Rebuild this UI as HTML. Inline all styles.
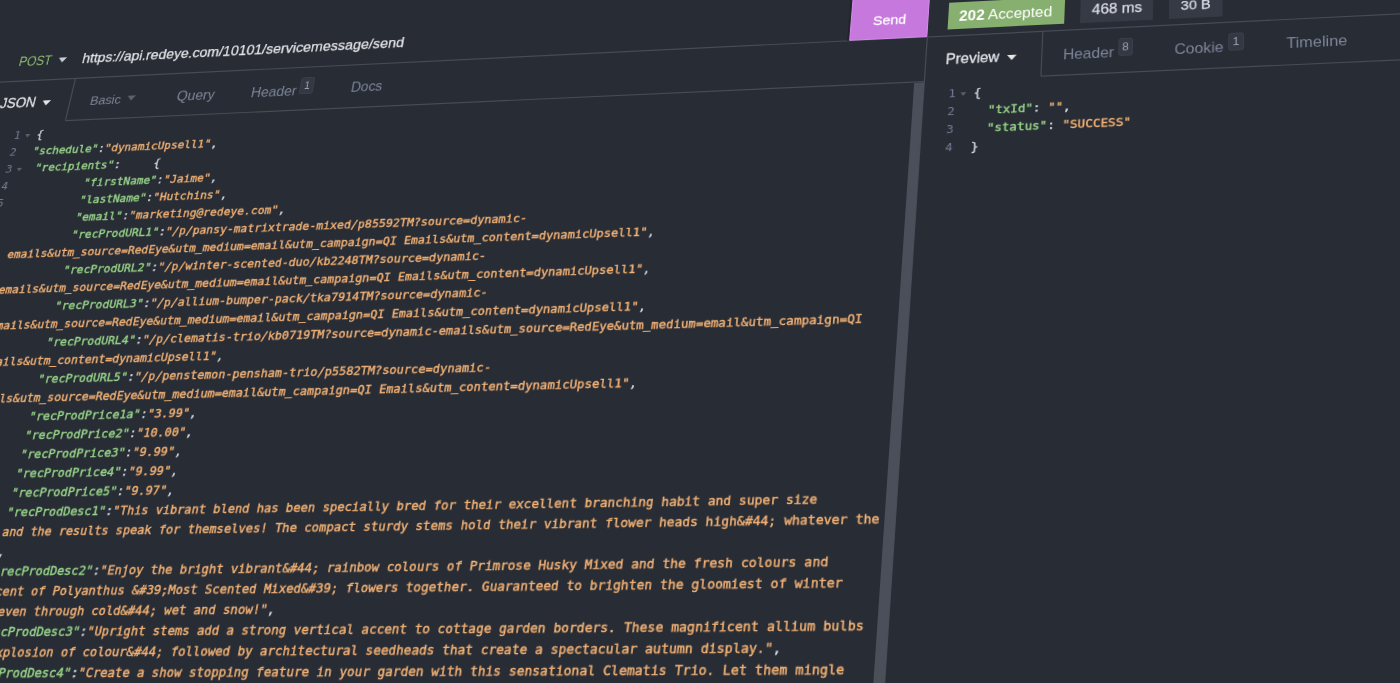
<!DOCTYPE html>
<html lang="en"><head><meta charset="utf-8"><title>Insomnia</title><style>
html,body{margin:0;padding:0;background:#282c34;}
body{width:1400px;height:683px;overflow:hidden;position:relative;}
#w{position:absolute;left:0;top:0;width:0;height:0;transform-origin:0 0;transform:matrix3d(0.8300468507,-0.04561336981,0,-6.276996772e-05,-0.2114893297,0.8159016292,0,-0.0001695810426,0,0,1,0,36.10583803,137.9209594,0,1);}
#w div,#w span,#w pre{position:absolute;margin:0;white-space:pre;}
#w .t{font-family:"Liberation Sans",Arial,sans-serif;}
#w pre{letter-spacing:0.015px;-webkit-text-stroke:0.42px;font-family:"DejaVu Sans Mono","Liberation Mono",monospace;font-size:12.956px;line-height:20px;color:#d4d9e4;}
#w pre.ln{color:#757b93;text-align:right;-webkit-text-stroke:0;}
i{font-style:normal}
.k{color:#96d488}.s{color:#f2b174}.p{color:#d4d9e4}
</style></head><body><svg width="1400" height="683" viewBox="0 0 1400 683" style="position:absolute;left:0;top:0"><line x1="-55.83" y1="84.87" x2="1442.27" y2="11.85" stroke="#474b56" stroke-width="1.20"/>
<line x1="65.40" y1="120.70" x2="924.34" y2="81.54" stroke="#474b56" stroke-width="1.20"/>
<line x1="1040.95" y1="76.22" x2="1444.13" y2="57.83" stroke="#474b56" stroke-width="1.20"/>
<line x1="75.51" y1="78.47" x2="65.40" y2="120.70" stroke="#474b56" stroke-width="1.20"/>
<line x1="1042.85" y1="31.32" x2="1040.95" y2="76.22" stroke="#474b56" stroke-width="1.20"/>
<line x1="927.28" y1="36.95" x2="882.29" y2="718.87" stroke="#474b56" stroke-width="1.20"/>
<polygon points="914.17,83.05 924.27,82.59 882.29,718.87 870.91,718.88" fill="#4b4f5a" />
<polygon points="854.18,-14.49 930.48,-18.51 926.84,36.54 849.70,40.31" fill="#c678dd" stroke="#d68cec" stroke-width="1"/>
<line x1="852.35" y1="-14.39" x2="847.81" y2="40.83" stroke="#20232a" stroke-width="1.20"/>
<polygon points="949.20,2.74 1065.17,-3.18 1064.15,23.67 947.55,29.40" fill="#87b070" />
<polygon points="1081.01,-6.74 1153.50,-10.46 1152.91,19.65 1079.97,23.24" fill="#353a44" />
<polygon points="1169.33,-11.27 1222.66,-14.01 1222.50,16.40 1168.84,19.04" fill="#353a44" /></svg><div id="w">
<span class="t" style="left:939.30px;top:-99.95px;font-size:15.30px;line-height:15.30px;color:#ffffff;-webkit-text-stroke:0.3px">Send</span>
<span class="t" style="left:-43.90px;top:-101.70px;font-size:16.60px;line-height:16.60px;color:#8fbf72;transform:scaleX(0.88);transform-origin:0 0">POST</span>
<div style="left:3.75px;top:-96.75px;width:0;height:0;border-left:5.25px solid transparent;border-right:5.25px solid transparent;border-top:6.50px solid #c8ccd4"></div>
<span class="t" style="left:33.30px;top:-102.34px;font-size:16.70px;line-height:16.70px;color:#e4e6ea;-webkit-text-stroke:0.25px">https://api.redeye.com/10101/servicemessage/send</span>
<span class="t" style="left:-53.90px;top:-51.14px;font-size:16.00px;line-height:16.00px;color:#e2e5ea;-webkit-text-stroke:0.3px">JSON</span>
<div style="left:-3.50px;top:-45.30px;width:0;height:0;border-left:5.50px solid transparent;border-right:5.50px solid transparent;border-top:6.00px solid #e6e6e6"></div>
<span class="t" style="left:54.90px;top:-50.34px;font-size:15.05px;line-height:15.05px;color:#7c849a;">Basic</span>
<div style="left:98.75px;top:-45.55px;width:0;height:0;border-left:5.25px solid transparent;border-right:5.25px solid transparent;border-top:6.50px solid #5b606d"></div>
<span class="t" style="left:158.30px;top:-51.49px;font-size:16.41px;line-height:16.41px;color:#7c849a;">Query</span>
<span class="t" style="left:245.70px;top:-51.31px;font-size:16.20px;line-height:16.20px;color:#7c849a;">Header</span>
<div style="left:302.30px;top:-58.50px;width:15.50px;height:20.30px;background:#343842;border-radius:3.5px;box-shadow:inset 0 0 0 1px #3b3f4a"></div>
<span class="t" style="left:306.70px;top:-53.93px;font-size:12.20px;line-height:12.20px;color:#9aa2b5;">1</span>
<span class="t" style="left:362.00px;top:-50.94px;font-size:15.76px;line-height:15.76px;color:#7c849a;">Docs</span>
<span class="t" style="left:1031.80px;top:-101.50px;font-size:16.30px;line-height:16.30px;color:#ffffff;"><b>202</b> Accepted</span>
<span class="t" style="left:1172.30px;top:-100.44px;font-size:16.00px;line-height:16.00px;color:#dcdfe5;-webkit-text-stroke:0.25px">468 ms</span>
<span class="t" style="left:1264.80px;top:-100.06px;font-size:15.07px;line-height:15.07px;color:#dcdfe5;-webkit-text-stroke:0.25px">30 B</span>
<span class="t" style="left:1020.20px;top:-51.07px;font-size:15.91px;line-height:15.91px;color:#e2e5ea;-webkit-text-stroke:0.3px">Preview</span>
<div style="left:1085.30px;top:-45.20px;width:0;height:0;border-left:5.50px solid transparent;border-right:5.50px solid transparent;border-top:6.00px solid #e6e6e6"></div>
<span class="t" style="left:1143.70px;top:-51.28px;font-size:16.16px;line-height:16.16px;color:#7c849a;">Header</span>
<div style="left:1200.50px;top:-58.50px;width:15.50px;height:20.30px;background:#343842;border-radius:3.5px;box-shadow:inset 0 0 0 1px #3b3f4a"></div>
<span class="t" style="left:1204.90px;top:-53.93px;font-size:12.20px;line-height:12.20px;color:#9aa2b5;">8</span>
<span class="t" style="left:1258.90px;top:-51.30px;font-size:16.19px;line-height:16.19px;color:#7c849a;">Cookie</span>
<div style="left:1314.00px;top:-58.50px;width:15.50px;height:20.30px;background:#343842;border-radius:3.5px;box-shadow:inset 0 0 0 1px #3b3f4a"></div>
<span class="t" style="left:1318.40px;top:-53.93px;font-size:12.20px;line-height:12.20px;color:#9aa2b5;">1</span>
<span class="t" style="left:1373.00px;top:-51.53px;font-size:16.46px;line-height:16.46px;color:#7c849a;">Timeline</span>
<pre style="left:0;top:-14.49px"><i class="p">{</i></pre>
<pre class="ln" style="left:-50.90px;top:-14.49px;width:31.20px">1</pre>
<pre style="left:0;top:5.51px"><i class="k">"schedule"</i><i class="p">:</i><i class="s">"dynamicUpsell1"</i><i class="p">,</i></pre>
<pre class="ln" style="left:-50.90px;top:5.51px;width:31.20px">2</pre>
<pre style="left:0;top:25.51px"> <i class="k">"recipients"</i><i class="p">:</i>     <i class="p">{</i></pre>
<pre class="ln" style="left:-50.90px;top:25.51px;width:31.20px">3</pre>
<pre style="left:0;top:45.51px">         <i class="k">"firstName"</i><i class="p">:</i><i class="s">"Jaime"</i><i class="p">,</i></pre>
<pre class="ln" style="left:-50.90px;top:45.51px;width:31.20px">4</pre>
<pre style="left:0;top:65.51px">         <i class="k">"lastName"</i><i class="p">:</i><i class="s">"Hutchins"</i><i class="p">,</i></pre>
<pre class="ln" style="left:-50.90px;top:65.51px;width:31.20px">5</pre>
<pre style="left:0;top:85.51px">         <i class="k">"email"</i><i class="p">:</i><i class="s">"marketing@redeye.com"</i><i class="p">,</i></pre>
<pre class="ln" style="left:-50.90px;top:85.51px;width:31.20px">6</pre>
<pre style="left:0;top:105.51px">         <i class="k">"recProdURL1"</i><i class="p">:</i><i class="s">"/p/pansy-matrixtrade-mixed/p85592TM?source=dynamic-</i></pre>
<pre class="ln" style="left:-50.90px;top:105.51px;width:31.20px">7</pre>
<pre style="left:0;top:125.51px"><i class="s">emails&amp;utm_source=RedEye&amp;utm_medium=email&amp;utm_campaign=QI Emails&amp;utm_content=dynamicUpsell1"</i><i class="p">,</i></pre>
<pre style="left:0;top:145.51px">         <i class="k">"recProdURL2"</i><i class="p">:</i><i class="s">"/p/winter-scented-duo/kb2248TM?source=dynamic-</i></pre>
<pre class="ln" style="left:-50.90px;top:145.51px;width:31.20px">8</pre>
<pre style="left:0;top:165.51px"><i class="s">emails&amp;utm_source=RedEye&amp;utm_medium=email&amp;utm_campaign=QI Emails&amp;utm_content=dynamicUpsell1"</i><i class="p">,</i></pre>
<pre style="left:0;top:185.51px">         <i class="k">"recProdURL3"</i><i class="p">:</i><i class="s">"/p/allium-bumper-pack/tka7914TM?source=dynamic-</i></pre>
<pre class="ln" style="left:-50.90px;top:185.51px;width:31.20px">9</pre>
<pre style="left:0;top:205.51px"><i class="s">emails&amp;utm_source=RedEye&amp;utm_medium=email&amp;utm_campaign=QI Emails&amp;utm_content=dynamicUpsell1"</i><i class="p">,</i></pre>
<pre style="left:0;top:225.51px">         <i class="k">"recProdURL4"</i><i class="p">:</i><i class="s">"/p/clematis-trio/kb0719TM?source=dynamic-emails&amp;utm_source=RedEye&amp;utm_medium=email&amp;utm_campaign=QI</i></pre>
<pre class="ln" style="left:-50.90px;top:225.51px;width:31.20px">10</pre>
<pre style="left:0;top:245.51px"><i style="margin-left:1.7px"></i><i class="s">Emails&amp;utm_content=dynamicUpsell1"</i><i class="p">,</i></pre>
<pre style="left:0;top:265.51px">         <i class="k">"recProdURL5"</i><i class="p">:</i><i class="s">"/p/penstemon-pensham-trio/p5582TM?source=dynamic-</i></pre>
<pre class="ln" style="left:-50.90px;top:265.51px;width:31.20px">11</pre>
<pre style="left:0;top:285.51px"><i class="s">emails&amp;utm_source=RedEye&amp;utm_medium=email&amp;utm_campaign=QI Emails&amp;utm_content=dynamicUpsell1"</i><i class="p">,</i></pre>
<pre style="left:0;top:305.51px">         <i class="k">"recProdPrice1a"</i><i class="p">:</i><i class="s">"3.99"</i><i class="p">,</i></pre>
<pre class="ln" style="left:-50.90px;top:305.51px;width:31.20px">12</pre>
<pre style="left:0;top:325.51px">         <i class="k">"recProdPrice2"</i><i class="p">:</i><i class="s">"10.00"</i><i class="p">,</i></pre>
<pre class="ln" style="left:-50.90px;top:325.51px;width:31.20px">13</pre>
<pre style="left:0;top:345.51px">         <i class="k">"recProdPrice3"</i><i class="p">:</i><i class="s">"9.99"</i><i class="p">,</i></pre>
<pre class="ln" style="left:-50.90px;top:345.51px;width:31.20px">14</pre>
<pre style="left:0;top:365.51px">         <i class="k">"recProdPrice4"</i><i class="p">:</i><i class="s">"9.99"</i><i class="p">,</i></pre>
<pre class="ln" style="left:-50.90px;top:365.51px;width:31.20px">15</pre>
<pre style="left:0;top:385.51px">         <i class="k">"recProdPrice5"</i><i class="p">:</i><i class="s">"9.97"</i><i class="p">,</i></pre>
<pre class="ln" style="left:-50.90px;top:385.51px;width:31.20px">16</pre>
<pre style="left:0;top:405.51px">         <i class="k">"recProdDesc1"</i><i class="p">:</i><i class="s">"This vibrant blend has been specially bred for their excellent branching habit and super size</i></pre>
<pre class="ln" style="left:-50.90px;top:405.51px;width:31.20px">17</pre>
<pre style="left:0;top:425.51px"><i class="s">blossoms and the results speak for themselves! The compact sturdy stems hold their vibrant flower heads high&amp;#44; whatever the</i></pre>
<pre style="left:0;top:445.51px"><i class="s">weather."</i><i class="p">,</i></pre>
<pre style="left:0;top:465.51px">         <i class="k">"recProdDesc2"</i><i class="p">:</i><i class="s">"Enjoy the bright vibrant&amp;#44; rainbow colours of Primrose Husky Mixed and the fresh colours and</i></pre>
<pre class="ln" style="left:-50.90px;top:465.51px;width:31.20px">18</pre>
<pre style="left:0;top:485.51px"><i class="s">heavenly scent of Polyanthus &amp;#39;Most Scented Mixed&amp;#39; flowers together. Guaranteed to brighten the gloomiest of winter</i></pre>
<pre style="left:0;top:505.51px"><i class="s">days ahead even through cold&amp;#44; wet and snow!"</i><i class="p">,</i></pre>
<pre style="left:0;top:525.51px">         <i class="k">"recProdDesc3"</i><i class="p">:</i><i class="s">"Upright stems add a strong vertical accent to cottage garden borders. These magnificent allium bulbs</i></pre>
<pre class="ln" style="left:-50.90px;top:525.51px;width:31.20px">19</pre>
<pre style="left:0;top:545.51px"><i class="s">produce an explosion of colour&amp;#44; followed by architectural seedheads that create a spectacular autumn display."</i><i class="p">,</i></pre>
<pre style="left:0;top:565.51px">         <i class="k">"recProdDesc4"</i><i class="p">:</i><i class="s">"Create a show stopping feature in your garden with this sensational Clematis Trio. Let them mingle</i></pre>
<pre class="ln" style="left:-50.90px;top:565.51px;width:31.20px">20</pre>
<pre style="left:0;top:585.51px"><i class="s">through shrubs and climb over fences for a spectacular display of colour from early summer."</i><i class="p">,</i></pre>
<div style="left:-13.75px;top:-5.30px;width:0;height:0;border-left:3.25px solid transparent;border-right:3.25px solid transparent;border-top:4.20px solid #5b606d"></div>
<div style="left:-13.75px;top:34.70px;width:0;height:0;border-left:3.25px solid transparent;border-right:3.25px solid transparent;border-top:4.20px solid #5b606d"></div>
<pre style="left:1052.10px;top:-14.49px"><i class="p">{</i></pre>
<pre class="ln" style="left:1001.90px;top:-14.49px;width:31.20px">1</pre>
<pre style="left:1052.10px;top:5.51px">  <i class="k">"txId"</i><i class="p">: </i><i class="s">""</i><i class="p">,</i></pre>
<pre class="ln" style="left:1001.90px;top:5.51px;width:31.20px">2</pre>
<pre style="left:1052.10px;top:25.51px">  <i class="k">"status"</i><i class="p">: </i><i class="s">"SUCCESS"</i></pre>
<pre class="ln" style="left:1001.90px;top:25.51px;width:31.20px">3</pre>
<pre style="left:1052.10px;top:45.51px"><i class="p">}</i></pre>
<pre class="ln" style="left:1001.90px;top:45.51px;width:31.20px">4</pre>
<div style="left:1038.45px;top:-5.30px;width:0;height:0;border-left:3.25px solid transparent;border-right:3.25px solid transparent;border-top:4.20px solid #5b606d"></div>
</div></body></html>
